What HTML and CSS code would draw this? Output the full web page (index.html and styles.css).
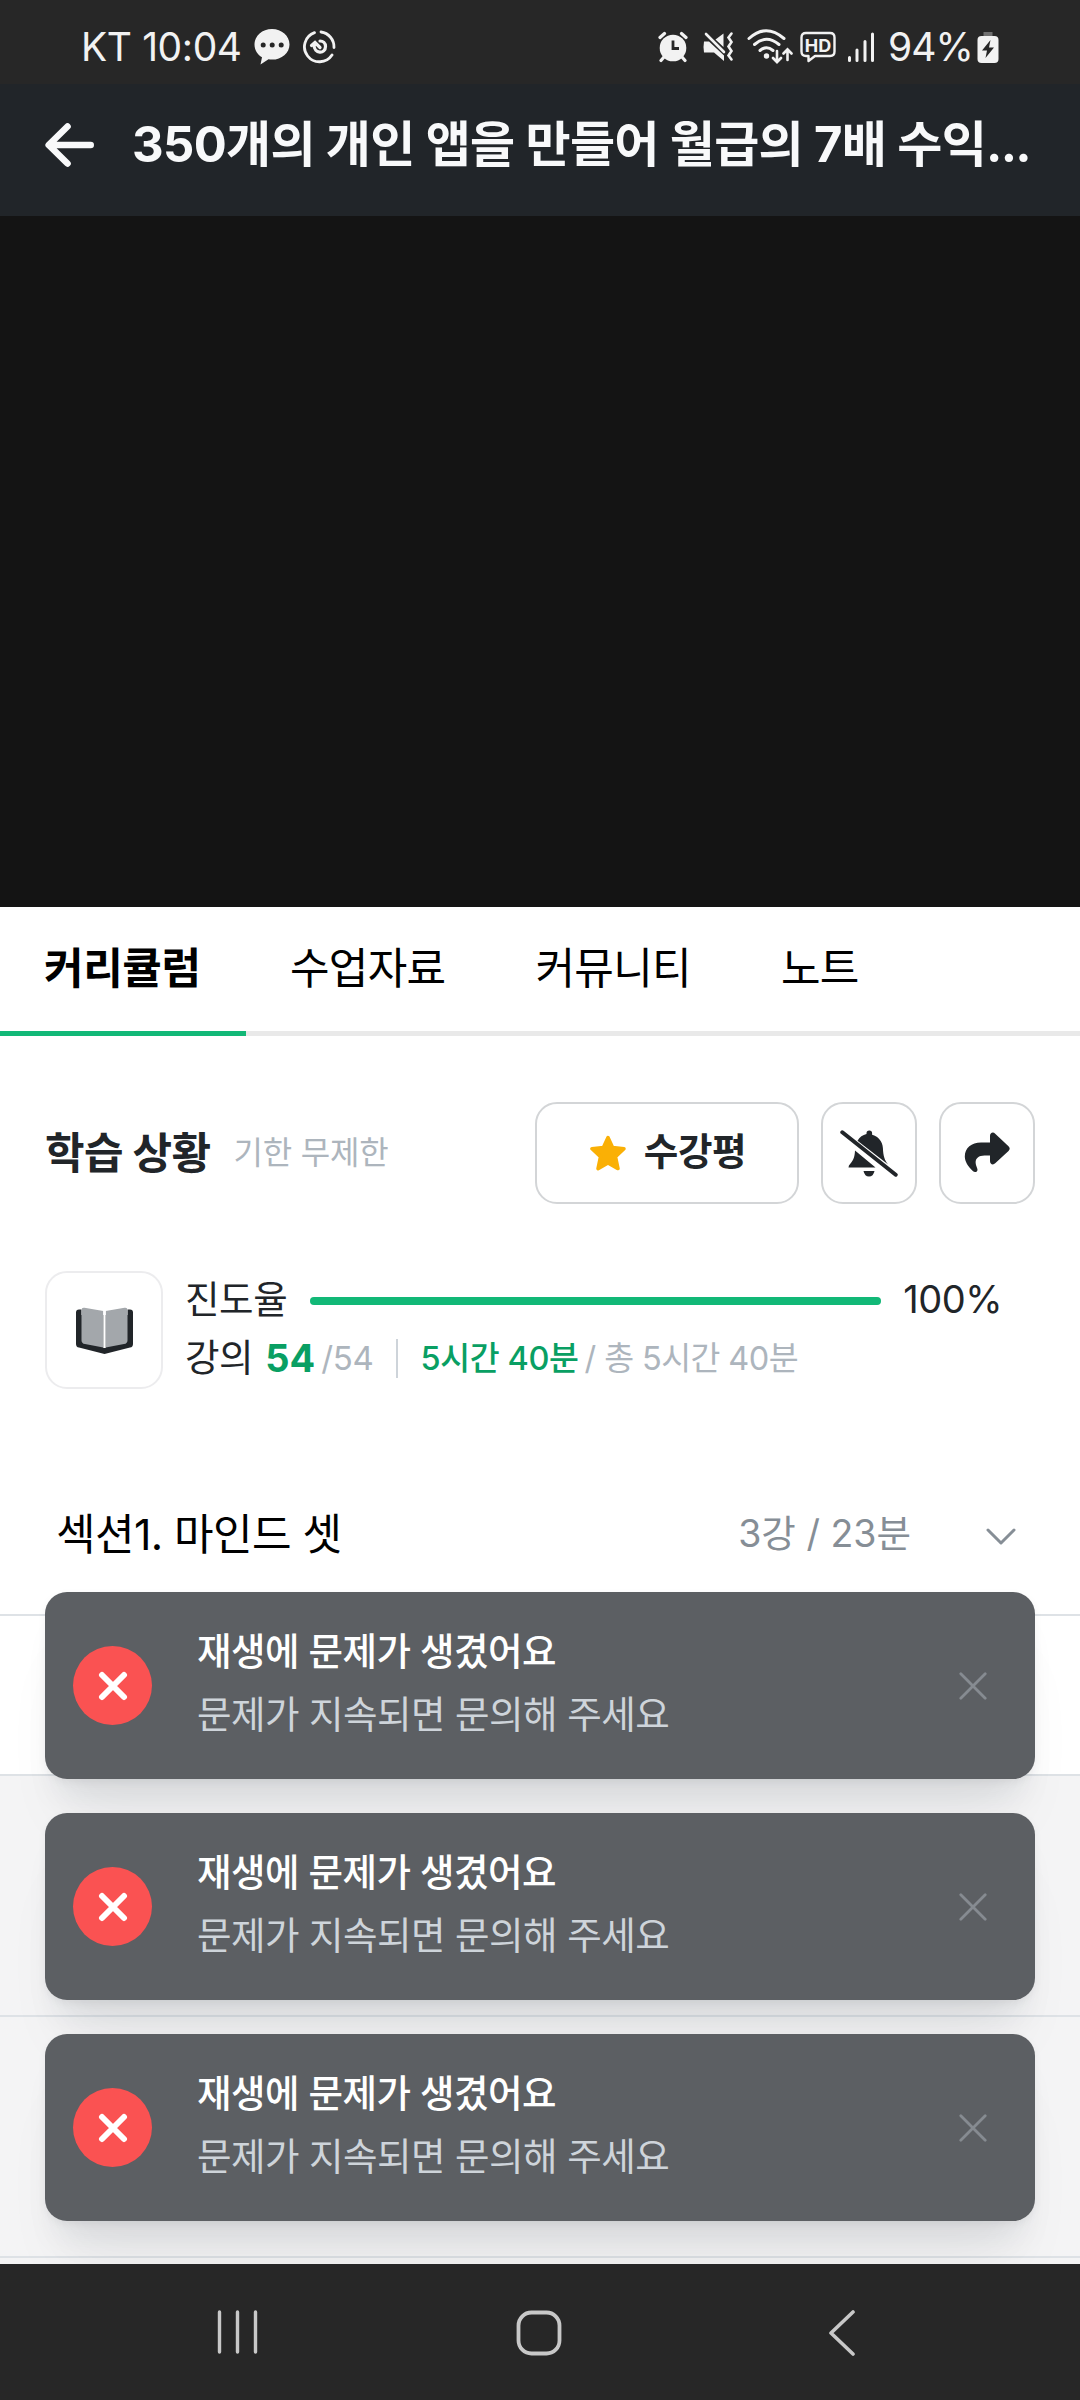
FILE: index.html
```html
<!DOCTYPE html>
<html lang="ko">
<head>
<meta charset="utf-8">
<title>강의 수강</title>
<link rel="stylesheet" href="styles.css">
</head>
<body>
<div class="screen">
  <div class="status-bar">
    <div class="status-left">
      <span class="status-text clock">KT 10:04</span>
      <svg class="icon-talk" width="36" height="38" viewBox="0 0 36 38"><path fill="#f2f2f2" d="M18 1C8.300 1 .5 7.800.5 16.500c0 5.500 3 10 7.500 12.800L6.500 36.500l8-5.200c1.200.2 2.300.3 3.500.3 9.700 0 17.500-6.800 17.500-15.200S27.700 1 18 1z"/><g fill="#272727"><circle cx="9.200" cy="17" r="2.500"/><circle cx="18.200" cy="17" r="2.500"/><circle cx="27.200" cy="17" r="2.500"/></g></svg>
      <svg class="icon-swirl" width="34" height="34" viewBox="0 0 34 34" fill="none" stroke="#f2f2f2" stroke-width="2.800" stroke-linecap="round"><path d="M12.500 2.600A15 15 0 1 0 30 25"/><path d="M19 2A15 15 0 0 1 32 17.500"/><path stroke-width="3.200" d="M9.500 15.500L13 12.500l5 5M12 15c0 9 11.500 9.500 11.500 1.500 0-3.500-2.500-5.500-5.500-5.500"/></svg>
    </div>
    <div class="status-right">
      <svg class="icon-alarm" width="30" height="32" viewBox="0 0 30 32"><g fill="none" stroke="#f2f2f2" stroke-width="3.200" stroke-linecap="round"><path d="M2 6.500L6.500 2.500M28 6.500L23.500 2.500M6 26l-3 3.500M24 26l3 3.500"/></g><circle cx="15" cy="17" r="13.300" fill="#f2f2f2"/><path d="M15 9.500V17.500H21" fill="none" stroke="#272727" stroke-width="2.800"/></svg>
      <svg class="icon-mute" width="32" height="32" viewBox="0 0 32 32"><path fill="#f2f2f2" d="M1 10.500h5l15 14V30L11 21.500H1q-1-5.500 0-11zM12.500 8.500L20.500 2.500V16z"/><g fill="none" stroke="#f2f2f2" stroke-linecap="round"><path stroke-width="2.600" d="M3 3l18 18"/><path stroke-width="2.600" d="M28.500 2.500l-3 4 3 4.500-3 4.500 3 4.500-3 4.500 3 4"/></g></svg>
      <svg class="icon-wifi" width="46" height="36" viewBox="0 0 46 36" fill="none" stroke="#f2f2f2" stroke-width="3" stroke-linecap="round"><path d="M2 9.500Q19-6 37 9.500M7.500 15.500Q19.500 5 32 15.500M13 21.500Q19.500 16 26 21.500"/><circle cx="19.500" cy="27" r="1.200" fill="#f2f2f2"/><path stroke-width="2.600" d="M30 22v11m-4-4l4 4.200 4-4.200M40.500 31V20.500m-4 4l4-4.200 4 4.200"/></svg>
      <svg class="icon-hd" width="36" height="32" viewBox="0 0 36 32"><path fill="none" stroke="#f2f2f2" stroke-width="2.400" stroke-linejoin="round" d="M6 2h24q4.500 0 4.500 4.500v14q0 4.500-4.500 4.500H15l-6.500 5v-5H6q-4.500 0-4.500-4.500v-14Q1.500 2 6 2z"/><text class="hd-label" x="18" y="20.500" text-anchor="middle">HD</text></svg>
      <svg class="icon-signal" width="28" height="32" viewBox="0 0 28 32" stroke="#f2f2f2" stroke-width="3" stroke-linecap="round"><path d="M2.500 26.500v3M10 19v10.500M18 10.500v19M25.500 3v26.500"/></svg>
      <span class="status-text battery">94%</span>
      <svg class="icon-battery" width="22" height="33" viewBox="0 0 22 33"><path fill="#707070" d="M6.500 1h9v5h-9z"/><rect x=".5" y="5" width="21" height="27" rx="4" fill="#f2f2f2"/><path fill="#272727" d="M13.500 9L5 19.500h5L8.500 27 17 16.500h-5z"/></svg>
    </div>
  </div>

  <header class="course-header">
    <svg class="icon-back" width="50" height="44" viewBox="0 0 50 44" fill="none" stroke="#f8f9fa" stroke-width="6.600" stroke-linecap="round" stroke-linejoin="round"><path d="M45.700 22H4M22.500 3.500L3.700 22l18.800 18.500"/></svg>
    <h1 class="course-title">350개의 개인 앱을 만들어 월급의 7배 수익<span class="dots">...</span></h1>
  </header>

  <div class="video"></div>

  <nav class="tabs">
    <span class="tab tab-active">커리큘럼</span>
    <span class="tab">수업자료</span>
    <span class="tab">커뮤니티</span>
    <span class="tab">노트</span>
  </nav>

  <section class="study-head">
    <h2 class="study-title">학습 상황</h2>
    <span class="study-limit">기한 무제한</span>
    <div class="actions">
      <button class="btn btn-review">
        <svg width="36" height="36" viewBox="0 0 36 36"><path fill="#fab005" stroke="#fab005" stroke-width="3.500" stroke-linejoin="round" d="M18 2.500l4.600 10 11.400 1.300-8.500 7.800 2.500 12L18 28l-10 5.600 2.500-12L2 13.800l11.400-1.300z"/></svg>
        <span>수강평</span>
      </button>
      <button class="btn btn-icon">
        <svg width="58" height="47" viewBox="0 0 58 47"><g fill="#212529"><path d="M26.500 4V3.200a2.800 2.800 0 0 1 5.600 0V4.800C38 6.300 42.500 11.500 42.900 18c.3 7.500 1.600 12.500 5.300 16.500L17.500 10.700C19.500 7.200 22.800 4.800 26.500 4z"/><path d="M15 20.500L35.500 37.500H8.500q0-2.200 1.800-3.800C13.800 30 14.800 26 15 20.500z"/><path d="M23.500 41h11q-1.200 5.500-5.500 5.500T23.500 41z"/></g><path d="M2.300 2.300l53.400 42.400" stroke="#212529" stroke-width="4" stroke-linecap="round"/></svg>
      </button>
      <button class="btn btn-icon">
        <svg width="48" height="42" viewBox="0 0 48 42"><path fill="#212529" d="M27 10.500V4c0-3.200 3-4.500 5.200-2.300L45.500 14.200c1.600 1.500 1.600 3.200 0 4.700L32.200 31.300C30 33.500 27 32.200 27 29v-5.500h-5.500c-7 0-10 4-8.500 9.500l1.300 3.700c1 3-2.300 4.500-4.500 2.300C5 34.500 1.800 29.500 1.800 24.500 1.800 16 8.500 10.500 18 10.500z"/></svg>
      </button>
    </div>
  </section>

  <section class="progress">
    <div class="book-box">
      <svg width="57" height="47" viewBox="0 0 57 47"><path fill="#212529" d="M3 2.500h51q3 0 3 3V37q0 3-3 3.600L28.500 47 3 40.600Q0 40 0 37V5.500q0-3 3-3z"/><path fill="#fff" d="M5.500 0h46v8h-46z"/><path fill="#a3a7ab" d="M5.500 3q0-2.700 3-2.200L27.300 4v36.500L9 37q-3.500-.5-3.500-3.800zM51.500 3q0-2.700-3-2.200L29.700 4v36.500L48 37q3.500-.5 3.500-3.800z"/><path d="M28.500 3v38" stroke="#fff" stroke-width="2.400"/></svg>
    </div>
    <div class="progress-body">
      <div class="progress-row">
        <span class="label">진도율</span>
        <div class="bar"><div class="bar-fill" style="width:100%"></div></div>
        <span class="percent">100%</span>
      </div>
      <div class="count-row">
        <span class="label">강의</span>
        <span class="done">54</span>
        <span class="total">/54</span>
        <span class="divider"></span>
        <span class="time-done">5시간 40분</span>
        <span class="time-total">/ 총 5시간 40분</span>
      </div>
    </div>
  </section>

  <section class="section-row">
    <span class="section-name">섹션1. 마인드 셋</span>
    <span class="section-meta">3강 / 23분</span>
    <svg class="chevron" width="30" height="18" viewBox="0 0 30 18" fill="none" stroke="#868e96" stroke-width="3" stroke-linecap="round" stroke-linejoin="round"><path d="M2 2l13 13L28 2"/></svg>
  </section>
  <div class="lesson-row lesson-white"></div>
  <div class="lesson-row lesson-first"></div>
  <div class="lesson-row lesson-second"></div>
  <div class="lesson-row lesson-rest"></div>

  <footer class="nav-bar">
    <svg class="nav-recents" width="42" height="44" viewBox="0 0 42 44" stroke="#c8c8c8" stroke-width="3.400" stroke-linecap="round"><path d="M2.500 2v40M20.500 2v40M38.500 2v40"/></svg>
    <svg class="nav-home" width="46" height="46" viewBox="0 0 46 46"><rect x="2.500" y="2.500" width="41" height="41" rx="13" fill="none" stroke="#c8c8c8" stroke-width="3.800"/></svg>
    <svg class="nav-back" width="28" height="46" viewBox="0 0 28 46" fill="none" stroke="#c8c8c8" stroke-width="3.600" stroke-linecap="round" stroke-linejoin="round"><path d="M25 2L3 23l22 21"/></svg>
  </footer>

  <div class="toasts">
    <div class="toast">
      <span class="toast-badge"><svg width="30" height="30" viewBox="0 0 30 30" stroke="#fff" stroke-width="6" stroke-linecap="round"><path d="M4 4l22 22M26 4L4 26"/></svg></span>
      <div class="toast-text"><p class="toast-title">재생에 문제가 생겼어요</p><p class="toast-desc">문제가 지속되면 문의해 주세요</p></div>
      <svg class="toast-close" width="28" height="28" viewBox="0 0 28 28" stroke="#868b91" stroke-width="2.800" stroke-linecap="round"><path d="M1.800 1.800l24.400 24.400M26.200 1.800L1.800 26.200"/></svg>
    </div>
    <div class="toast">
      <span class="toast-badge"><svg width="30" height="30" viewBox="0 0 30 30" stroke="#fff" stroke-width="6" stroke-linecap="round"><path d="M4 4l22 22M26 4L4 26"/></svg></span>
      <div class="toast-text"><p class="toast-title">재생에 문제가 생겼어요</p><p class="toast-desc">문제가 지속되면 문의해 주세요</p></div>
      <svg class="toast-close" width="28" height="28" viewBox="0 0 28 28" stroke="#868b91" stroke-width="2.800" stroke-linecap="round"><path d="M1.800 1.800l24.400 24.400M26.200 1.800L1.800 26.200"/></svg>
    </div>
    <div class="toast">
      <span class="toast-badge"><svg width="30" height="30" viewBox="0 0 30 30" stroke="#fff" stroke-width="6" stroke-linecap="round"><path d="M4 4l22 22M26 4L4 26"/></svg></span>
      <div class="toast-text"><p class="toast-title">재생에 문제가 생겼어요</p><p class="toast-desc">문제가 지속되면 문의해 주세요</p></div>
      <svg class="toast-close" width="28" height="28" viewBox="0 0 28 28" stroke="#868b91" stroke-width="2.800" stroke-linecap="round"><path d="M1.800 1.800l24.400 24.400M26.200 1.800L1.800 26.200"/></svg>
    </div>
  </div>
</div>
</body>
</html>
```
FILE: styles.css
```css
* { box-sizing: border-box; margin: 0; padding: 0; }
body { font-family: Inter, "Noto Sans CJK KR", sans-serif; background: #fff; color: #212529; }
svg { display: block; flex: none; }
span, h1, h2, p { white-space: nowrap; }

.screen { position: relative; width: 1080px; height: 2400px; overflow: hidden; display: flex; flex-direction: column; background: #fff; }
.screen > * { flex: none; }

/* Android status bar */
.status-bar { height: 84px; background: #272727; display: flex; justify-content: space-between; padding: 0 81px; }
.status-left, .status-right { display: flex; align-items: center; height: 94px; }
.status-text { color: #f2f2f2; font-size: 39px; line-height: 48px; font-weight: 400; }
.clock { width: 173px; letter-spacing: -0.4px; }
.icon-swirl { margin-left: 12px; }
.icon-mute { margin-left: 15px; }
.icon-wifi { margin-left: 12px; }
.icon-hd { margin-left: 7px; }
.hd-label { font: 700 18px Inter, sans-serif; fill: #f2f2f2; }
.icon-signal { margin-left: 11px; }
.battery { margin-left: 13px; width: 83px; letter-spacing: -0.9px; }
.icon-battery { margin-left: 6px; }

/* Course header */
.course-header { height: 132px; background: #212529; display: flex; align-items: center; padding: 0 45px 10px; }
.course-title { margin-left: 37px; font-size: 49px; line-height: 60px; font-weight: 700; color: #f8f9fa; letter-spacing: -0.65px; }
.dots { letter-spacing: -1.8px; }
.video { height: 691px; background: #141414; }

/* Tabs */
.tabs { height: 129px; display: flex; border-bottom: 5px solid #e9e9e9; }
.tab { height: 129px; padding: 0 46px 0 44px; font-size: 43px; line-height: 122px; letter-spacing: -0.7px; color: #000; }
.tab-active { font-weight: 700; border-bottom: 5px solid #12b877; width: 246px; letter-spacing: -0.4px; }

/* Study status */
.study-head { height: 102px; margin-top: 66px; padding: 0 45px; display: flex; align-items: center; }
.study-title { font-size: 43px; line-height: 60px; font-weight: 700; letter-spacing: -0.6px; }
.study-limit { margin-left: 23px; font-size: 32px; line-height: 48px; letter-spacing: -0.2px; color: #adb5bd; }
.actions { margin-left: auto; display: flex; gap: 22px; }
.btn { height: 102px; background: #fff; border: 2px solid #d3d5d7; border-radius: 22px; display: flex; align-items: center; justify-content: center; font-family: inherit; color: #212529; }
.btn-review { width: 264px; gap: 18px; font-size: 37.5px; font-weight: 600; line-height: 50px; letter-spacing: -0.4px; padding-left: 2px; }
.btn-review span { padding-bottom: 2px; }
.btn-icon { width: 96px; }

/* Progress */
.progress { height: 118px; margin-top: 67px; padding: 0 45px; display: flex; }
.book-box { width: 118px; height: 118px; border: 2px solid #ececee; border-radius: 22px; display: flex; align-items: center; justify-content: center; }
.progress-body { margin-left: 22px; flex: 1; }
.progress-row, .count-row { display: flex; align-items: center; height: 58px; }
.label { font-size: 37.5px; line-height: 58px; letter-spacing: -0.4px; }
.bar { width: 571px; height: 8px; margin: 2px 0 0 23px; border-radius: 4px; background: #e9ecef; }
.bar-fill { height: 8px; border-radius: 4px; background: #12b877; }
.percent { margin-left: 22px; font-size: 38px; line-height: 46px; padding-bottom: 2px; letter-spacing: -0.5px; }
.done { margin-left: 12px; font-size: 38px; line-height: 46px; font-weight: 700; color: #099f63; }
.total { margin-left: 6px; font-size: 33px; line-height: 46px; color: #adb5bd; letter-spacing: -0.3px; }
.divider { width: 2px; height: 39px; margin-left: 22px; background: #ced4da; }
.time-done { margin-left: 23px; font-size: 32.5px; line-height: 46px; padding-top: 1px; font-weight: 500; color: #099f63; letter-spacing: -0.4px; }
.time-total { margin-left: 6px; font-size: 32.5px; line-height: 46px; padding-top: 1px; color: #adb5bd; letter-spacing: -0.6px; }

/* Curriculum */
.section-row { height: 227px; padding: 65px 64px 0 56px; display: flex; align-items: center; border-bottom: 2px solid #dee2e6; }
.section-name { font-size: 43px; line-height: 60px; color: #000; letter-spacing: -0.6px; }
.section-meta { margin-left: auto; font-size: 37.5px; line-height: 60px; color: #868e96; }
.chevron { margin: 6px 0 0 75px; }
.lesson-row { border-bottom: 2px solid #dee2e6; background: #f4f4f5; }
.lesson-white { height: 160px; background: #fff; }
.lesson-first { height: 241px; }
.lesson-second { height: 241px; }
.lesson-rest { height: 6px; border: 0; }

/* Android navigation bar */
.nav-bar { height: 136px; background: #272727; display: flex; padding: 46px 0 0 217px; position: relative; z-index: 2; }
.nav-home { margin-left: 257px; }
.nav-back { margin-left: 266px; }

/* Toast stack */
.toasts { position: absolute; left: 45px; top: 1592px; width: 990px; display: flex; flex-direction: column; gap: 34px; }
.toast { height: 187px; padding: 0 48px 0 28px; display: flex; align-items: center; background: #5c5f63; border-radius: 22px; box-shadow: 0 3px 8px rgba(0,0,0,.05), 0 56px 65px -20px rgba(0,0,0,.06), 0 28px 34px -14px rgba(20,40,70,.09); }
.toast-badge { width: 79px; height: 79px; border-radius: 50%; background: #fa5252; display: flex; align-items: center; justify-content: center; }
.toast-text { margin-left: 45px; padding-bottom: 6px; }
.toast-title, .toast-desc { font-size: 37.5px; line-height: 63px; letter-spacing: -0.5px; }
.toast-title { font-weight: 500; color: #fff; }
.toast-desc { color: #ced4da; }
.toast-close { margin-left: auto; }
```
